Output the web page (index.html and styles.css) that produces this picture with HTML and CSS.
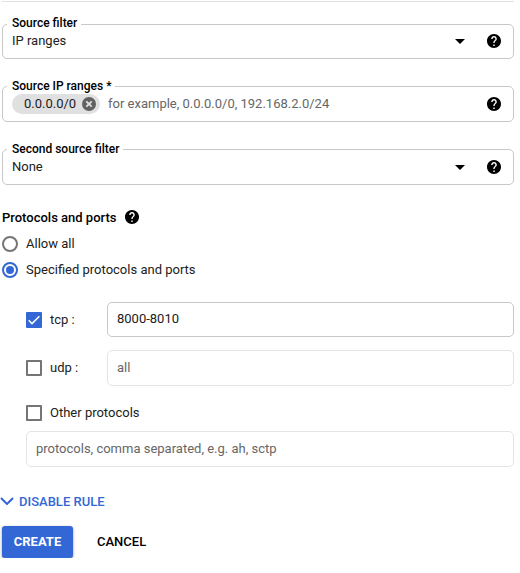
FILE: index.html
```html
<!DOCTYPE html>
<html lang="en">
<head>
<meta charset="utf-8">
<title>Create a firewall rule</title>
<link rel="stylesheet" href="styles.css">
</head>
<body>
<svg class="defs" aria-hidden="true">
  <symbol id="help" viewBox="2 2 20 20"><path d="M12 2C6.48 2 2 6.48 2 12s4.480 10 10 10 10-4.480 10-10S17.520 2 12 2zm1 17h-2v-2h2v2zm2.070-7.750l-.9.920C13.450 12.900 13 13.500 13 15h-2v-.5c0-1.100.450-2.100 1.170-2.830l1.240-1.260c.370-.360.590-.860.590-1.410 0-1.100-.9-2-2-2s-2 .9-2 2H8c0-2.210 1.790-4 4-4s4 1.790 4 4c0 .880-.360 1.680-.930 2.250z"/></symbol>
</svg>
<form class="rule-form">
  <div class="field filter">
    <span class="label">Source filter</span>
    <span class="value">IP ranges</span>
    <svg class="arrow" viewBox="0 0 10 5"><path d="M0 0h10L5 5z"/></svg>
    <svg class="help"><use href="#help"/></svg>
  </div>
  <div class="field ranges">
    <span class="label">Source IP ranges *</span>
    <span class="chip">0.0.0.0/0<svg viewBox="0 0 14 14"><circle cx="7" cy="7" r="7" fill="#616161"/><path d="M4.300 4.300l5.400 5.400m0-5.400l-5.400 5.400" stroke="#e0e0e0" stroke-width="1.800"/></svg></span>
    <span class="value hint">for example, 0.0.0.0/0, 192.168.2.0/24</span>
    <svg class="help"><use href="#help"/></svg>
  </div>
  <div class="field second">
    <span class="label">Second source filter</span>
    <span class="value">None</span>
    <svg class="arrow" viewBox="0 0 10 5"><path d="M0 0h10L5 5z"/></svg>
    <svg class="help"><use href="#help"/></svg>
  </div>

  <div class="heading"><span>Protocols and ports</span><svg class="help"><use href="#help"/></svg></div>
  <div class="option"><span class="radio"></span>Allow all</div>
  <div class="option"><span class="radio on"></span>Specified protocols and ports</div>

  <div class="protocols">
    <div class="protocol tcp">
      <span class="check on"><svg viewBox="0 0 16 16"><path d="M2.700 8.300l3.300 3.300 7.400-7.400"/></svg></span>
      <span class="name">tcp :</span>
      <div class="input">8000-8010</div>
    </div>
    <div class="protocol udp">
      <span class="check"></span>
      <span class="name">udp :</span>
      <div class="input disabled">all</div>
    </div>
    <div class="protocol other"><span class="check"></span><span>Other protocols</span></div>
    <div class="input disabled">protocols, comma separated, e.g. ah, sctp</div>
  </div>

  <div class="disclosure"><svg viewBox="0 0 14 8"><path d="M1 1l6 6 6-6"/></svg>DISABLE RULE</div>
  <div class="actions">
    <span class="create">CREATE</span>
    <span class="cancel">CANCEL</span>
  </div>
</form>
</body>
</html>
```
FILE: styles.css
```css
* { box-sizing: border-box; }
body {
  margin: 0;
  background: #fff;
  color: #212121;
  font: 13px/20px Roboto, sans-serif;
}
svg { display: block; flex: none; }
.defs { display: none; }
.rule-form {
  width: 512px;
  margin: 1px 0 0 2px;
  border-top: 1px solid #e0e0e0;
}
.field {
  position: relative;
  display: flex;
  align-items: center;
  height: 36px;
  padding: 0 12px 0 9px;
  border: 1px solid #c8c8c8;
  border-radius: 5px;
}
.filter { height: 35px; margin-top: 22px; }
.ranges, .second { margin-top: 27px; }
.label {
  position: absolute;
  top: -9px;
  left: 4px;
  padding: 0 4px 0 5px;
  background: #fff;
  color: #000;
  font-size: 12px;
  line-height: 16px;
  font-weight: 500;
}
.filter .label { top: -10px; }
.value { flex: 1; }
.filter .value { padding-bottom: 2px; }
.filter .help, .filter .arrow { margin-bottom: 1px; }
.hint { color: #666; }
.arrow { width: 10px; height: 5px; margin-right: 22px; }
.help { width: 14px; height: 14px; }
.chip {
  display: flex;
  align-items: center;
  justify-content: space-between;
  width: 88px;
  height: 20px;
  margin-right: 8px;
  padding: 0 4px 0 12px;
  border-radius: 10px;
  background: #e0e0e0;
}
.chip svg { width: 14px; height: 14px; }
.heading {
  display: flex;
  align-items: center;
  gap: 9px;
  height: 26px;
  margin-top: 19px;
  color: #000;
  font-weight: 500;
}
.heading span { padding-top: 2px; }
.option {
  display: flex;
  align-items: center;
  gap: 8px;
  height: 26px;
}
.heading + .option { margin-top: 1px; }
.radio {
  width: 16px;
  height: 16px;
  border: 2px solid #757575;
  border-radius: 50%;
}
.radio.on {
  padding: 2px;
  border-color: #3367d6;
  background: #3367d6 content-box;
}
.protocols { margin: 19px 0 0 24px; }
.protocol { display: flex; align-items: center; gap: 8px; }
.protocol .name { width: 49px; }
.check {
  flex: none;
  width: 16px;
  height: 16px;
  border: 2px solid #757575;
  border-radius: 1px;
}
.check.on { border: 0; background: #3367d6; }
.check path { fill: none; stroke: #fff; stroke-width: 1.500; }
.input {
  flex: 1;
  height: 35px;
  padding: 6px 9px;
  border: 1px solid #c8c8c8;
  border-radius: 5px;
}
.input.disabled { height: 36px; padding-top: 7px; border-color: #e4e4e4; color: #666; }
.udp { margin-top: 13px; }
.other { height: 20px; margin: 17px 0 8px; }
.disclosure {
  display: flex;
  align-items: center;
  gap: 5px;
  height: 20px;
  margin: 25px 0 0 -2px;
  color: #3367d6;
  font-weight: 500;
}
.disclosure svg { width: 14px; height: 8px; margin-bottom: 2px; }
.disclosure path { fill: none; stroke: #3367d6; stroke-width: 2; }
.actions {
  display: flex;
  align-items: center;
  gap: 24px;
  margin-top: 14px;
  color: #000;
  font-weight: 500;
}
.create {
  width: 71px;
  height: 32px;
  border-radius: 3px;
  background: #3367d6;
  box-shadow: 0 1px 3px rgba(0, 0, 0, 0.4);
  color: #fff;
  font-weight: 700;
  line-height: 32px;
  text-align: center;
}
```
